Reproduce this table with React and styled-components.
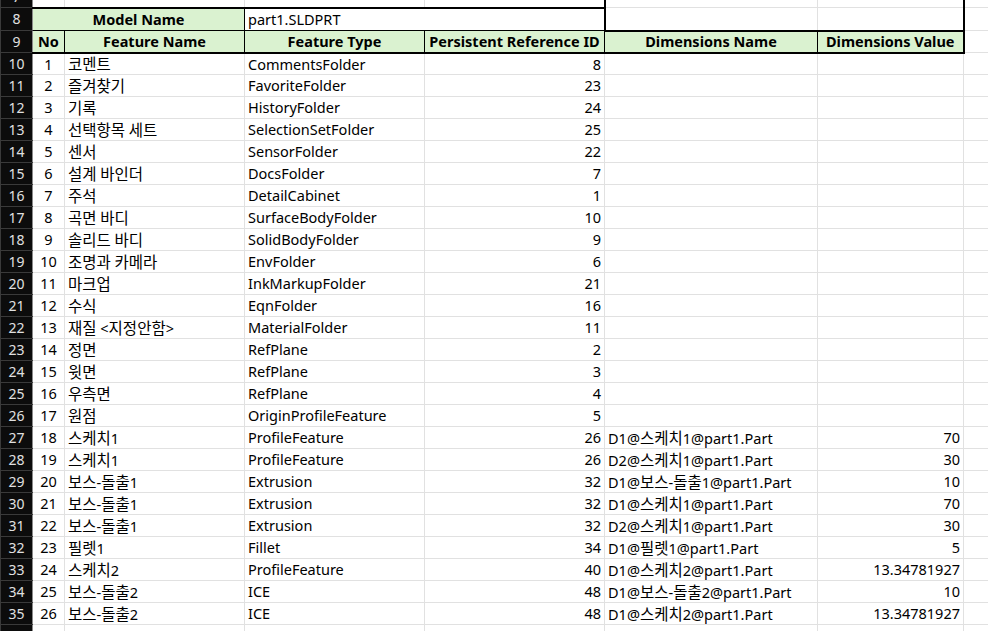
import React from "react";
import styled, { createGlobalStyle } from "styled-components";

const rows = [
  [1, "코멘트", "CommentsFolder", 8],
  [2, "즐겨찾기", "FavoriteFolder", 23],
  [3, "기록", "HistoryFolder", 24],
  [4, "선택항목 세트", "SelectionSetFolder", 25],
  [5, "센서", "SensorFolder", 22],
  [6, "설계 바인더", "DocsFolder", 7],
  [7, "주석", "DetailCabinet", 1],
  [8, "곡면 바디", "SurfaceBodyFolder", 10],
  [9, "솔리드 바디", "SolidBodyFolder", 9],
  [10, "조명과 카메라", "EnvFolder", 6],
  [11, "마크업", "InkMarkupFolder", 21],
  [12, "수식", "EqnFolder", 16],
  [13, "재질 <지정안함>", "MaterialFolder", 11],
  [14, "정면", "RefPlane", 2],
  [15, "윗면", "RefPlane", 3],
  [16, "우측면", "RefPlane", 4],
  [17, "원점", "OriginProfileFeature", 5],
  [18, "스케치1", "ProfileFeature", 26, "D1@스케치1@part1.Part", "70"],
  [19, "스케치1", "ProfileFeature", 26, "D2@스케치1@part1.Part", "30"],
  [20, "보스-돌출1", "Extrusion", 32, "D1@보스-돌출1@part1.Part", "10"],
  [21, "보스-돌출1", "Extrusion", 32, "D1@스케치1@part1.Part", "70"],
  [22, "보스-돌출1", "Extrusion", 32, "D2@스케치1@part1.Part", "30"],
  [23, "필렛1", "Fillet", 34, "D1@필렛1@part1.Part", "5"],
  [24, "스케치2", "ProfileFeature", 40, "D1@스케치2@part1.Part", "13.34781927"],
  [25, "보스-돌출2", "ICE", 48, "D1@보스-돌출2@part1.Part", "10"],
  [26, "보스-돌출2", "ICE", 48, "D1@스케치2@part1.Part", "13.34781927"],
];

const GlobalStyle = createGlobalStyle`
  body {
    margin: 0;
    background: #fff;
    font-family: "Noto Sans", "Noto Sans CJK KR", sans-serif;
  }
`;

const Viewport = styled.div`
  width: 988px;
  height: 631px;
  overflow: hidden;
`;

const Sheet = styled.table`
  margin-top: -15px;
  border-collapse: collapse;
  table-layout: fixed;
  width: 1013px;
  font-size: 14.5px;
  color: #000;
`;

const Row = styled.tr`
  height: ${(p) => p.h || 22}px;
`;

const RowHead = styled.td`
  background: #0c0c0c;
  color: #e0e0e0;
  font-size: 14px;
  text-align: center;
  border: 1px solid #3a3a3a;
  border-right: 1px solid #8a8a8a;
  padding: 0;
  line-height: 1;
`;

const Cell = styled.td`
  padding: 0 3px;
  border: 1px solid #e1e1e1;
  white-space: nowrap;
  overflow: hidden;
  line-height: 1;
  text-align: ${(p) => p.align || "left"};
  background: ${(p) => (p.green ? "#daf2d0" : "#fff")};
  font-weight: ${(p) => (p.bold ? 700 : 400)};
  ${(p) => p.bt && `border-top: ${p.bt};`}
  ${(p) => p.bb && `border-bottom: ${p.bb};`}
  ${(p) => p.bl && `border-left: ${p.bl};`}
  ${(p) => p.br && `border-right: ${p.br};`}
`;

const Ko = styled.span`
  font-family: "Noto Sans CJK KR", sans-serif;
  font-size: 15.5px;
`;

// hangul runs get the CJK face at a slightly larger size, like Malgun Gothic
const Mixed = ({ text }) =>
  String(text)
    .split(/([가-힣]+)/)
    .map((part, i) => (/[가-힣]/.test(part) ? <Ko key={i}>{part}</Ko> : part));

const THICK = "2px solid #000";
const THIN = "1px solid #000";

const App = () => (
  <>
    <GlobalStyle />
    <Viewport>
      <Sheet>
        <colgroup>
          <col style={{ width: 32 }} />
          <col style={{ width: 32 }} />
          <col style={{ width: 180 }} />
          <col style={{ width: 180 }} />
          <col style={{ width: 180 }} />
          <col style={{ width: 213 }} />
          <col style={{ width: 146 }} />
          <col style={{ width: 50 }} />
        </colgroup>
        <tbody>
          <Row>
            <RowHead>7</RowHead>
            <Cell bb={THICK} />
            <Cell bb={THICK} />
            <Cell bb={THICK} />
            <Cell bb={THICK} br={THICK} />
            <Cell bl={THICK} />
            <Cell br={THICK} />
            <Cell />
          </Row>
          <Row h={23}>
            <RowHead>8</RowHead>
            <Cell colSpan={2} green bold align="center" bt={THICK} bb={THIN} br={THIN}>
              Model Name
            </Cell>
            <Cell colSpan={2} bt={THICK} bb={THIN} br={THICK}>
              part1.SLDPRT
            </Cell>
            <Cell bl={THICK} bb={THICK} />
            <Cell br={THICK} bb={THICK} />
            <Cell />
          </Row>
          <Row h={22}>
            <RowHead>9</RowHead>
            {["No", "Feature Name", "Feature Type", "Persistent Reference ID", "Dimensions Name", "Dimensions Value"].map(
              (h, i) => (
                <Cell
                  key={h}
                  green
                  bold
                  align="center"
                  bt={i >= 4 ? THICK : THIN}
                  bb={THICK}
                  bl={THIN}
                  br={i === 5 ? THICK : THIN}
                >
                  {h}
                </Cell>
              )
            )}
            <Cell />
          </Row>
          {rows.map(([no, name, type, id, dim = "", val = ""], i) => (
            <Row key={no}>
              <RowHead>{i + 10}</RowHead>
              <Cell align="center">{no}</Cell>
              <Cell>
                <Mixed text={name} />
              </Cell>
              <Cell>{type}</Cell>
              <Cell align="right">{id}</Cell>
              <Cell>
                <Mixed text={dim} />
              </Cell>
              <Cell align="right">{val}</Cell>
              <Cell />
            </Row>
          ))}
          <Row>
            <RowHead>36</RowHead>
            <Cell />
            <Cell />
            <Cell />
            <Cell />
            <Cell />
            <Cell />
            <Cell />
          </Row>
        </tbody>
      </Sheet>
    </Viewport>
  </>
);

export default App;
